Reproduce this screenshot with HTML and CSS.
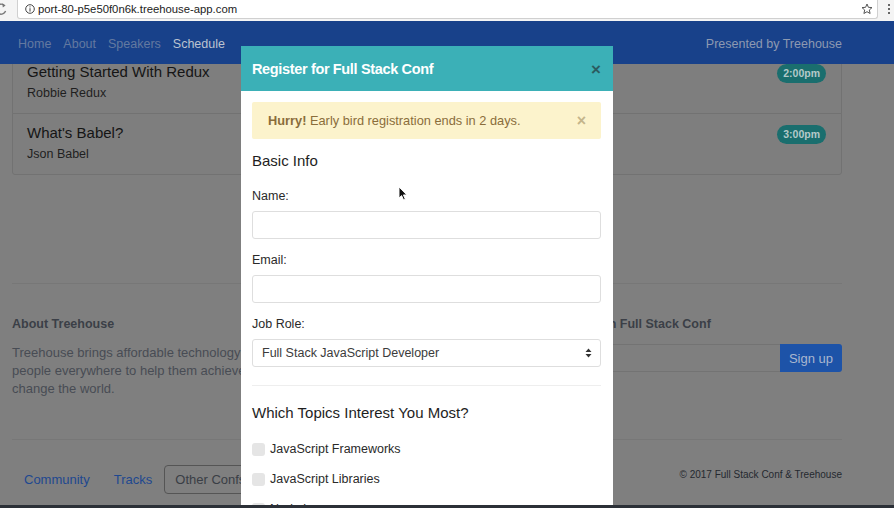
FILE: index.html
```html
<!DOCTYPE html>
<html lang="en">
<head>
<meta charset="utf-8">
<title>Full Stack Conf</title>
<link rel="stylesheet" href="styles.css">
</head>
<body>
<div class="chrome">
  <svg class="reload" width="10" height="14" viewBox="0 0 10 14"><path d="M7 3.2A5 5 0 1 0 8.6 9" fill="none" stroke="#777" stroke-width="1.4"/><path d="M5.4 1.2 8.6 3.4 5.8 5.6Z" fill="#777"/></svg>
  <div class="omnibox">
    <svg class="info" width="10" height="10" viewBox="0 0 10 10"><circle cx="5" cy="5" r="4.3" fill="none" stroke="#444" stroke-width="1"/><rect x="4.5" y="4.2" width="1" height="3.4" fill="#444"/><rect x="4.5" y="2.4" width="1" height="1" fill="#444"/></svg>
    <span class="url">port-80-p5e50f0n6k.treehouse-app.com</span>
    <svg class="star" width="12" height="12" viewBox="0 0 12 12"><path d="M6 1 7.4 4.3 11 4.6 8.3 7 9.1 10.5 6 8.7 2.9 10.5 3.7 7 1 4.6 4.6 4.3Z" fill="none" stroke="#555" stroke-width="1"/></svg>
  </div>
  <div class="menu-dots"><i></i><i></i><i></i></div>
</div>

<div class="site">
  <nav class="navbar">
    <div class="nav-links">
      <a class="nav-link">Home</a>
      <a class="nav-link">About</a>
      <a class="nav-link">Speakers</a>
      <a class="nav-link active">Schedule</a>
    </div>
    <span class="nav-brand">Presented by Treehouse</span>
  </nav>

  <main class="container">
    <ul class="schedule">
      <li class="session">
        <div class="session-info">
          <h3 class="session-title">Getting Started With Redux</h3>
          <p class="session-speaker">Robbie Redux</p>
        </div>
        <span class="badge">2:00pm</span>
      </li>
      <li class="session">
        <div class="session-info">
          <h3 class="session-title">What's Babel?</h3>
          <p class="session-speaker">Json Babel</p>
        </div>
        <span class="badge">3:00pm</span>
      </li>
    </ul>

    <footer class="footer">
      <div class="footer-cols">
        <div class="footer-about">
          <h4 class="footer-heading">About Treehouse</h4>
          <p class="footer-text">Treehouse brings affordable technology education to<br>people everywhere to help them achieve their dreams and<br>change the world.</p>
        </div>
        <div class="footer-signup">
          <h4 class="footer-heading">Stay up to date on Full Stack Conf</h4>
          <div class="signup-group">
            <div class="signup-input"></div>
            <button class="signup-btn">Sign up</button>
          </div>
        </div>
      </div>
      <div class="footer-bottom">
        <div class="footer-links">
          <a class="footer-link">Community</a>
          <a class="footer-link">Tracks</a>
          <a class="footer-btn">Other Confs</a>
        </div>
        <span class="copyright">© 2017 Full Stack Conf &amp; Treehouse</span>
      </div>
    </footer>
  </main>
</div>

<div class="modal">
  <div class="modal-header">
    <h2 class="modal-title">Register for Full Stack Conf</h2>
    <span class="modal-close">×</span>
  </div>
  <div class="modal-body">
    <div class="alert"><span><strong>Hurry!</strong> Early bird registration ends in 2 days.</span><span class="alert-close">×</span></div>
    <h3 class="form-section">Basic Info</h3>
    <div class="form-group first">
      <label class="form-label">Name:</label>
      <div class="form-input"></div>
    </div>
    <div class="form-group">
      <label class="form-label">Email:</label>
      <div class="form-input"></div>
    </div>
    <div class="form-group">
      <label class="form-label">Job Role:</label>
      <div class="form-input form-select"><span>Full Stack JavaScript Developer</span>
        <svg width="7" height="10" viewBox="0 0 7 10"><path d="M3.5 0.5 6.5 4H0.5Z M3.5 9.5 0.5 6H6.5Z" fill="#333"/></svg>
      </div>
    </div>
    <hr class="divider">
    <h3 class="form-section topics">Which Topics Interest You Most?</h3>
    <div class="check-row"><span class="check"></span>JavaScript Frameworks</div>
    <div class="check-row"><span class="check"></span>JavaScript Libraries</div>
    <div class="check-row"><span class="check"></span>Node.js</div>
  </div>
</div>

<svg class="cursor" width="10" height="15" viewBox="0 0 10 15"><path d="M1 1V12L3.6 9.6 5.6 14 7.3 13.2 5.4 8.9H8.8Z" fill="#111" stroke="#fff" stroke-width="0.9"/></svg>

<div class="taskbar"></div>
</body>
</html>
```

FILE: styles.css
```css
* { box-sizing: border-box; }
html, body { margin: 0; padding: 0; }
body {
  width: 894px;
  height: 508px;
  overflow: hidden;
  position: relative;
  font-family: "Liberation Sans", Arial, sans-serif;
  background: #7f7f7f;
  color: #222;
}

/* browser chrome */
.chrome {
  height: 21px;
  background: #f4f4f4;
  display: flex;
  align-items: flex-start;
  position: relative;
  z-index: 3;
}
.reload { margin: 2px 0 0 -3px; }
.omnibox {
  margin-left: 10px;
  width: 861px;
  height: 19px;
  background: #fff;
  border: 1px solid #d0d0d0;
  border-top: none;
  border-radius: 0 0 3px 3px;
  display: flex;
  align-items: center;
  padding-left: 7px;
}
.info { flex: none; }
.url { margin-left: 3px; font-size: 11.3px; color: #222; }
.star { margin-left: auto; margin-right: 4px; }
.menu-dots { margin-left: 10px; display: flex; flex-direction: column; gap: 2px; padding-top: 4px; }
.menu-dots i { width: 2px; height: 2px; background: #666; display: block; }

/* site */
.navbar {
  position: relative;
  z-index: 2;
  height: 43px;
  background: #18418a;
  display: flex;
  align-items: center;
  justify-content: space-between;
  padding: 2px 52px 0 18px;
  font-size: 12.5px;
}
.nav-links { display: flex; gap: 12px; }
.nav-link { color: #6379a0; }
.nav-link.active { color: #bcc3d0; }
.nav-brand { color: #8d99b1; }

.container { padding: 0 52px 0 12px; }

.schedule {
  list-style: none;
  margin: -12px 0 0;
  padding: 0;
}
.session {
  display: flex;
  justify-content: space-between;
  align-items: flex-start;
  border: 1px solid #727272;
  background: #7e7e7e;
  padding: 10px 15px 12px 14px;
}
.session + .session { margin-top: -1px; }
.session:first-child { border-radius: 3px 3px 0 0; }
.session:last-child { border-radius: 0 0 3px 3px; }
.session-title {
  margin: 0;
  font-size: 15px;
  line-height: 18px;
  font-weight: normal;
  color: #151515;
}
.session-speaker {
  margin: 4px 0 0;
  font-size: 12.5px;
  line-height: 16px;
  color: #1f1f1f;
}
.badge {
  margin-top: 1px;
  height: 19px;
  line-height: 19px;
  padding: 0 6px;
  border-radius: 10px;
  background: #1a6e6e;
  color: #b3c9c9;
  font-size: 10.5px;
  font-weight: bold;
}

.footer {
  margin-top: 108px;
  border-top: 1px solid #777;
}
.footer-cols {
  display: flex;
  justify-content: space-between;
  padding: 32px 0 0;
  height: 156px;
  border-bottom: 1px solid #777;
}
.footer-heading {
  margin: 0;
  font-size: 12.5px;
  line-height: 16px;
  font-weight: bold;
  color: #3b3f47;
}
.footer-text {
  margin: 12px 0 0;
  font-size: 13px;
  line-height: 18px;
  color: #484c54;
}
.footer-signup { width: 334px; }
.signup-group { display: flex; margin-top: 12px; }
.signup-input {
  flex: 1;
  height: 28px;
  border: 1px solid #737373;
  border-right: none;
  border-radius: 3px 0 0 3px;
}
.signup-btn {
  height: 28px;
  width: 62px;
  border: none;
  border-radius: 0 3px 3px 0;
  background: #1d53a8;
  color: #a9b7cf;
  font-family: inherit;
  font-size: 13px;
  padding: 0;
}
.footer-bottom {
  display: flex;
  justify-content: space-between;
  align-items: center;
  padding-top: 25px;
}
.footer-links { display: flex; align-items: center; }
.footer-link {
  padding: 0 12px;
  font-size: 13px;
  color: #1e4890;
  line-height: 28px;
  white-space: nowrap;
}
.footer-btn {
  font-size: 13px;
  color: #3a3e45;
  border: 1px solid #555;
  border-radius: 4px;
  padding: 0 10px;
  line-height: 27px;
  white-space: nowrap;
}
.copyright {
  font-size: 10px;
  color: #25292f;
  margin-top: -10px;
  white-space: nowrap;
}

/* modal */
.modal {
  position: absolute;
  left: 241px;
  top: 46px;
  width: 372px;
  height: 470px;
  background: #fff;
  z-index: 4;
}
.modal-header {
  height: 45px;
  background: #3bb0b7;
  display: flex;
  align-items: center;
  justify-content: space-between;
  padding: 0 12px 0 11px;
}
.modal-title {
  margin: 0;
  font-size: 14.5px;
  font-weight: bold;
  letter-spacing: -0.35px;
  color: #fff;
}
.modal-close {
  font-size: 17px;
  font-weight: bold;
  color: #2b5c60;
  margin-top: 2px;
}
.modal-body { padding: 11px 12px 0 11px; }
.alert {
  height: 37px;
  background: #fcf3cc;
  color: #8a6d3b;
  display: flex;
  align-items: center;
  justify-content: space-between;
  padding: 0 15px 0 16px;
  font-size: 12.8px;
  border-radius: 2px;
}
.alert-close { color: #c4b58b; font-weight: bold; font-size: 16px; }
.form-section {
  margin: 13px 0 0;
  font-size: 15px;
  line-height: 18px;
  font-weight: normal;
  color: #1e1e1e;
}
.form-group { margin-top: 13px; }
.form-group.first { margin-top: 18px; }
.form-label {
  display: block;
  font-size: 12.5px;
  line-height: 16px;
  color: #2a2a2a;
}
.form-input {
  margin-top: 7px;
  height: 28px;
  border: 1px solid #dedede;
  border-radius: 3px;
}
.form-select {
  display: flex;
  align-items: center;
  justify-content: space-between;
  padding: 0 8px 0 9px;
  font-size: 12.5px;
  color: #3b3b3b;
}
.divider {
  margin: 18px 0 0;
  border: none;
  border-top: 1px solid #eee;
}
.topics { margin-top: 18px; }
.check-row {
  display: flex;
  align-items: center;
  font-size: 12.5px;
  color: #2a2a2a;
  line-height: 16px;
  margin-top: 14px;
}
.topics + .check-row { margin-top: 19px; }
.check {
  width: 13px;
  height: 13px;
  border-radius: 3px;
  background: #e5e5e5;
  margin-right: 5px;
}

.cursor {
  position: absolute;
  left: 398px;
  top: 186px;
  z-index: 5;
}

.taskbar {
  position: absolute;
  left: 0;
  bottom: 0;
  width: 894px;
  height: 3px;
  background: #2b3037;
  z-index: 6;
}
```
